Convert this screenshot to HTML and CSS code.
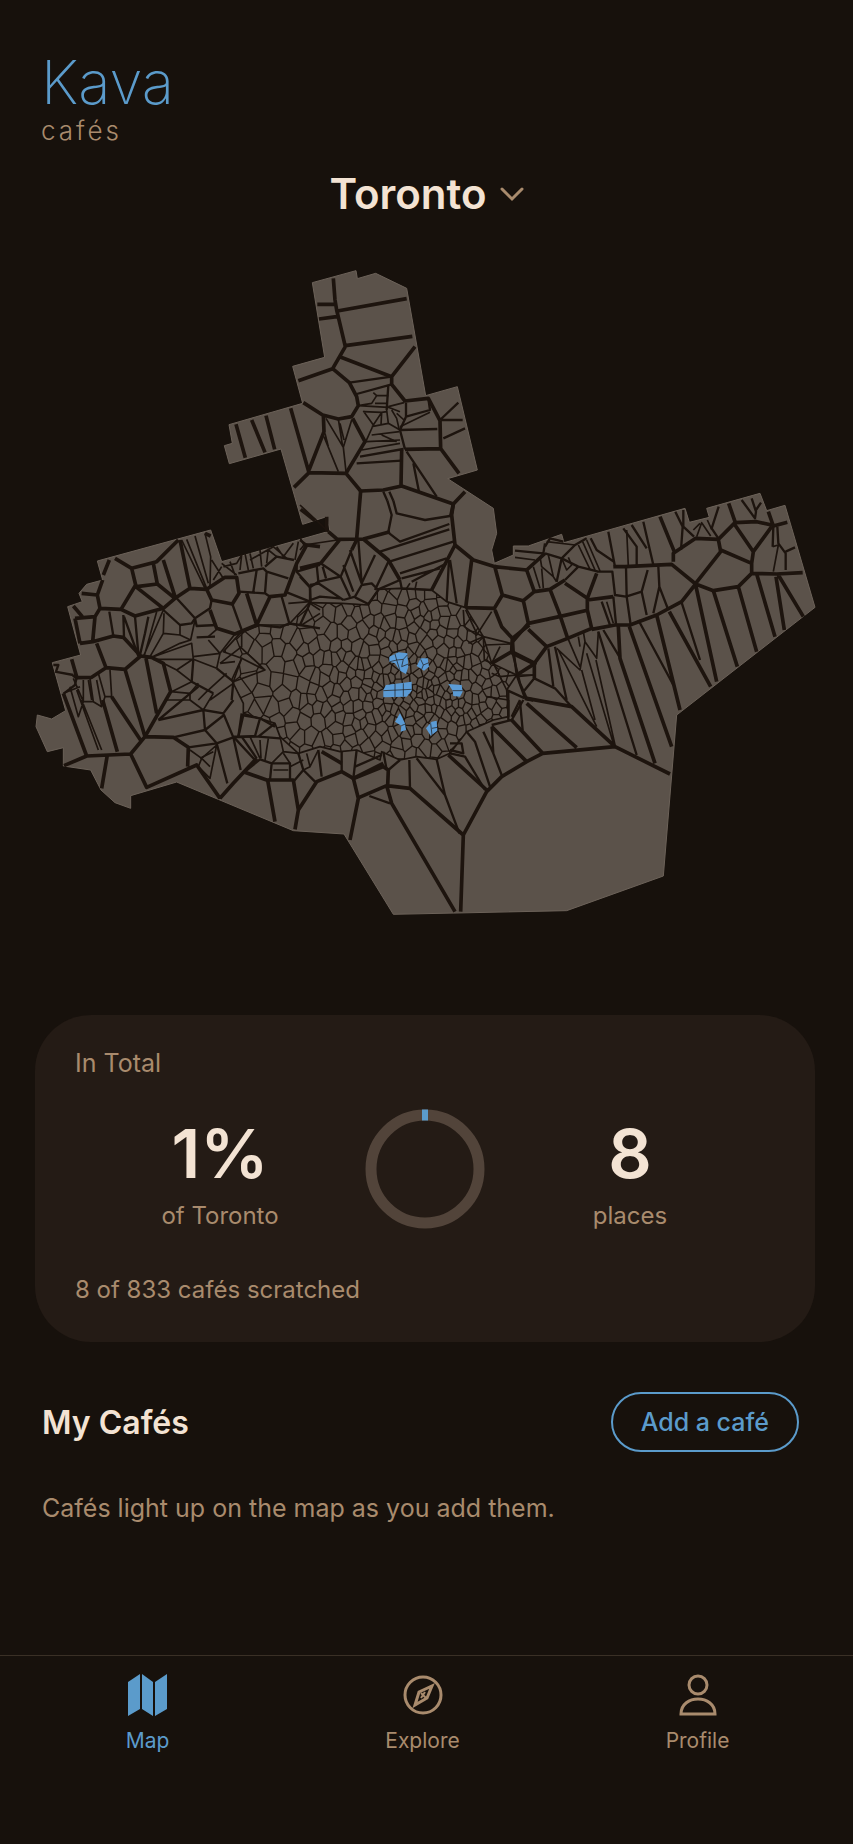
FILE: index.html
```
<!DOCTYPE html>
<html lang="en">
<head>
  <meta charset="UTF-8" />
  <meta name="viewport" content="width=device-width, initial-scale=1.0" />
  <title>Kava cafés</title>
  <link rel="stylesheet" href="styles.css">
</head>

<body>
  <div class="app">
    <header class="brand">
      <h1 class="brand-name">Kava</h1>
      <p class="brand-sub">cafés</p>
    </header>

    <main class="content">
      <div class="city-picker">
        <select id="citySelect" class="city-select" aria-label="City">
          <option>Toronto</option>
        </select>
        <svg class="chevron" viewBox="0 0 24 16" aria-hidden="true"><path d="M2 3 L12 13 L22 3" /></svg>
      </div>

      <svg class="city-map" viewBox="0 750 2559 2040" role="img" aria-label="Map of cafés in Toronto">
        <defs>
          <clipPath id="downtownClip">
            <path id="downtownShape" d="M780 1875 L865 1875 928 1808 1025 1810 1105 1815 1135 1768 1200 1765 1295 1770 1340 1805 1397 1823 1450 1910 1475 1990 1550 2025 1520 2070 1525 2150 1480 2160 1400 2195 1350 2260 1310 2278 1250 2270 1200 2280 1145 2255 1140 2280 1070 2250 1020 2255 960 2240 895 2260 840 2210 825 2170 730 2140 730 2110 695 2040 725 1975 670 1955 720 1900 Z" />
          </clipPath>
        </defs>

        <path class="land" d="M937 848 L1068 812 1072 836 1127 820 1220 865 1277 1187 1372 1160 1432 1410 1343 1436 1480 1525 1490 1600 1475 1650 1483 1690 1540 1665 1540 1638 1585 1638 1685 1603 1692 1628 2055 1525 2068 1567 2128 1552 2120 1525 2280 1480 2300 1532 2355 1516 2445 1822 2030 2145 1990 2628 1700 2732 1180 2743 1032 2502 880 2492 530 2346 392 2387 392 2425 345 2408 303 2370 272 2310 190 2298 190 2243 142 2255 108 2180 112 2145 155 2157 197 2132 157 1988 242 1965 203 1820 247 1805 237 1780 260 1753 308 1740 292 1683 632 1590 665 1685 990 1593 980 1550 908 1573 843 1347 688 1391 673 1337 697 1330 687 1274 908 1210 878 1099 974 1072 Z" />

        <!-- downtown: small cells, filled in by the script -->
        <g clip-path="url(#downtownClip)">
          <path id="downtownCells" class="edge fine" />
        </g>
        <use href="#downtownShape" class="edge thin" />

        <!-- north -->
        <g transform="translate(600 750)">
          <path class="edge thick" d="M400 85 L405 150 410 180 436 290 398 356 295 392 M412 183 L620 146 M436 287 L637 259 M352 163 H405 M357 207 L410 200 M645 290 L575 380 M423 322 L575 380 M398 356 L448 398 470 440 475 467 455 500 415 507 368 495 310 458 M575 380 V403 L615 453 685 445 720 512 M272 475 L327 668 282 712 M327 668 L438 670 482 723 M370 495 L372 545 327 660 M438 670 L495 575 458 505 M482 723 L550 720 605 708 760 762 795 725 M760 762 L752 800 M605 600 L603 708 M720 512 L722 596 777 670 M615 598 L722 596 M302 778 L345 812 M380 800 V845 M108 523 L136 623 M155 510 L195 607 M198 497 L224 598" />
          <path class="edge mid" d="M448 398 L575 380 M470 432 L575 403 M720 510 L775 458 M722 510 H788 M730 565 L795 535 M618 458 V500 L600 540 712 537 M600 540 L615 598 M470 640 L605 632 M480 620 L610 597 M620 605 L710 740 M640 640 L657 725 M685 445 L690 480 618 500 M565 405 L560 480 M550 725 L562 752 M568 725 L580 752" />
          <path class="edge thin" d="M475 467 L515 460 530 437 520 428 M530 437 H565 M525 460 H560 M475 467 L565 472 600 485 M560 480 L565 520 600 540 M490 483 L520 525 545 487 560 485 M545 487 L543 525 M520 525 L495 580 M490 485 L545 487 M515 530 L565 520 M515 555 L598 545 M500 575 L600 570 M545 555 L590 575 M485 600 L600 580 M600 530 L690 487 M575 480 L590 505 598 540 M590 490 L612 510 M565 470 L612 458 M378 505 L430 592 455 510 M415 507 L428 590 M432 570 L420 520 M372 560 L415 665 M430 592 L438 665 M375 550 L385 590" />
        </g>

        <!-- midtown -->
        <g transform="translate(900 1500)">
          <path class="edge thick" d="M182 -27 L170 117 M85 95 L112 118 190 117 270 95 M460 12 L455 45 465 135 520 180 585 200 M465 135 L395 270 M515 180 L497 323 M583 195 L607 285 583 325 497 323 M583 200 L680 210 M607 285 L672 303 M585 330 L605 380 637 415 688 375 M637 415 L635 455 705 490 650 525 M635 455 L575 490 M675 595 L700 600 M120 118 L62 190 0 205 M190 117 L265 180 300 240 M170 120 L155 150" />
          <path class="edge mid" d="M262 2 L275 45 265 95 M280 2 L290 40 375 60 450 48 M265 98 L300 125 448 72 M240 155 L448 88 M268 185 L460 125 M300 220 L440 175 M305 235 L420 205 M300 240 L305 265 395 270 M335 245 L440 190 M62 190 L122 230 150 290 M155 150 L122 230 M130 195 L160 275 M150 150 L185 250 M175 120 L185 250 225 165 M225 270 L265 185 M235 268 L300 240 M50 195 L55 245 122 230 M0 230 L30 262 55 245 M30 262 L32 308 M68 200 L78 235 M55 250 L130 300 M32 300 L60 290 120 295 M130 300 L165 290 185 255 215 250 235 270 205 312 165 292 M447 180 L440 305 M450 180 L470 310 M637 420 L650 525 675 595 M620 570 L675 595 M625 570 V650 M660 600 L635 650 M660 605 L668 690" />
          <path class="edge thin" d="M490 330 L493 380 530 405 575 335 M497 330 L530 400 550 410 632 430 M555 435 L632 432 M550 410 L553 480 575 490 M575 490 L600 440 M580 490 L620 570 M650 525 L600 530 M575 520 L600 530 M560 590 L625 600 M505 430 L550 410 M320 265 L330 250 M345 268 L350 245 M655 525 L700 525 M0 15 L85 95 M0 113 L12 135 M12 135 L112 120 M0 150 L12 135" />
        </g>

        <!-- west -->
        <g transform="translate(60 1500)">
          <path class="edge thick" d="M268 180 L250 225 M285 175 L335 205 410 185 475 120 M335 205 L347 255 303 328 240 325 232 285 248 240 M185 280 L232 285 M303 328 L345 348 430 325 465 295 510 265 560 268 M347 260 L430 325 M350 260 L412 252 465 295 M400 190 L412 252 M430 180 L465 290 M480 120 L510 265 M240 325 L225 350 165 355 M225 350 L218 425 180 430 M160 318 L187 350 M165 355 L180 430 M218 425 L280 408 310 412 362 468 315 508 258 503 230 430 M315 508 L375 710 M160 525 L170 533 215 532 258 503 M155 478 L170 530 M362 468 L395 472 430 490 452 575 375 710 332 762 200 768 132 797 M378 475 L410 640 M130 580 L200 768 M332 762 L380 862 530 795 600 895 M262 765 L245 865 M375 710 L460 712 505 742 503 800 M248 600 L292 755 M275 590 L365 725 M560 268 L575 300 637 312 657 280 650 232 615 232 Z M570 330 L590 385 645 402 710 375 750 290 795 285 830 190 860 135 900 140 M680 280 L710 375 M600 895 L640 850 710 775 M555 100 L572 108" />
          <path class="edge mid" d="M105 515 L160 525 M100 495 L115 495 108 515 M310 345 L312 410 M268 335 L280 408 M312 350 L355 468 M132 580 L165 555 170 533 M470 295 L525 355 570 325 575 300 M637 312 L665 390 M715 375 L780 382 808 370 785 290 M657 275 L735 280 750 290 M735 280 L740 215 805 235 M740 215 L730 205 655 220 M710 210 L700 275 M840 120 L860 135 M830 190 V215 L900 195 M830 215 L870 260 V305 L795 275 M870 255 L900 250 M735 200 L770 170 822 180 M808 370 L840 375 870 310 M840 375 L900 385 M430 330 L480 375 515 370 525 355 M590 375 L530 378 525 355 M585 410 L530 412 M345 350 L355 460 M385 350 L375 400 360 465 M505 742 L590 730 640 712 705 708 M550 630 L555 690 460 712 M415 660 L550 630 610 640 640 600 M555 690 L612 645 640 712 662 810 M555 690 L590 730 622 850 M665 710 L710 775 M665 640 L655 710 M665 645 L720 655 765 680 M705 708 L720 655 M415 660 L535 560 M520 478 L515 545 580 580 M590 505 L640 545 635 600" />
          <path class="edge thin" d="M480 375 V405 L512 420 525 360 M432 340 L430 400 390 470 M430 330 L370 470 M410 335 L372 470 M395 472 L480 430 512 420 M430 400 L480 405 M400 478 H520 M400 470 L515 430 520 478 M520 470 L600 460 645 402 M565 420 L600 460 M565 410 L590 388 M520 478 L590 505 M430 490 L470 510 515 545 455 575 M470 510 L515 480 M580 580 L550 630 510 600 510 580 535 550 M452 575 L510 580 M440 600 L510 600 M535 600 L560 575 620 520 M570 600 L640 550 M590 505 L600 460 M600 490 L645 485 M665 400 L665 440 600 490 M640 545 L665 475 735 510 Z M660 440 L735 510 M535 800 L570 835 590 735 M510 750 L545 775 590 735 M535 800 L545 775 570 800 M485 120 L555 265 M500 118 L560 265 M525 108 L565 250 M555 100 L572 170 570 260 M575 180 L610 235 M605 190 L650 225 M630 185 L645 225 M580 240 L605 200 M610 200 L650 190 665 165 660 210 M690 160 L700 205 M675 160 L685 210 M720 150 L725 200 M745 145 L740 190 M690 180 L760 140 800 175 M770 140 L790 170 820 130 M835 125 L825 180 M745 150 L770 170 M870 310 L900 330 M805 310 L870 305 M845 375 L900 340 M150 560 L175 650 190 605 160 535 M190 540 V605 L220 605 210 535 M220 605 L245 620 230 540 M245 620 L255 590 275 590 270 510 M185 600 L245 750 M170 570 L235 750 M205 540 L215 600 M235 520 L255 590 M130 580 L180 560" />
        </g>

        <!-- south west -->
        <g transform="translate(540 1800)">
          <path class="edge thick" d="M190 515 L260 540 340 540 355 630 345 688 M262 535 L285 665 M355 630 L410 545 485 515 520 535 535 595 510 720 M425 455 L485 490 M520 535 L610 490" />
          <path class="edge mid" d="M485 515 V455 M415 450 L425 530 M370 510 L405 545 M340 545 L370 510 355 460 M270 540 L275 490 240 478 195 515 M520 535 L530 450 M275 490 H330 V540 M160 410 L225 480 M190 345 L175 410 M285 370 L235 410 160 410 M235 410 L300 415" />
          <path class="edge thin" d="M280 510 H325 M210 410 L240 475 M240 420 L243 475 M265 415 L255 480 M275 490 L310 455 355 460 M310 455 L300 410 M330 490 L310 460 M330 500 L370 480 M380 460 L390 500 370 510 M415 450 L390 500 M60 475 L100 455" />
        </g>

        <!-- lakeshore -->
        <g transform="translate(960 2100)">
          <path class="edge thick" d="M620 10 L770 143 M515 80 L620 185 M575 60 L668 160 M422 635 L430 405 500 275 545 230 620 185 668 160 885 140 1050 222 M430 405 L270 265 200 257 118 292 M200 257 L215 310 405 635 M95 238 L190 200 205 210 203 257 M385 165 L500 270" />
          <path class="edge mid" d="M268 180 L270 265 M290 175 L375 285 418 400 M350 178 L375 285 M148 288 L210 310 M440 95 L465 125 510 260 M490 95 L520 160 545 225 M515 80 L520 160 M390 160 L435 170 495 270 M200 210 L190 155 M205 210 L240 180 M105 200 L185 165 M515 75 L575 60 610 0 M565 60 V0 M390 150 L430 160 425 130 390 130" />
        </g>

        <!-- east -->
        <g transform="translate(1500 1410)">
          <path class="edge thick" d="M80 300 L103 365 70 392 M103 365 L150 358 195 330 M70 392 L85 460 38 515 V550 L100 580 M85 460 L178 440 265 420 M150 358 L178 430 203 505 M195 340 L262 385 290 310 M262 385 V420 L275 475 203 505 140 530 85 478 M140 530 L103 580 V625 M262 390 L340 380 M340 290 L375 290 515 283 587 342 545 395 470 435 390 465 345 465 275 478 M520 275 V250 L587 205 655 208 705 158 770 155 815 165 M480 140 L525 250 M587 340 L662 245 655 208 M662 240 L755 280 760 245 815 170 M705 165 L760 245 M755 280 V310 L715 350 640 362 587 342 M640 362 L712 590 M715 350 L770 545 M770 312 L825 500 M587 345 L650 635 M508 425 L632 650 M755 310 L830 312 908 308 M835 315 L910 440 M828 320 L853 480 M470 435 L540 720 M388 470 L515 830 M355 470 L360 565 465 880 M686 100 L705 155 M805 125 L820 168 862 157 M80 685 L215 710 345 830 M80 300 L135 250" />
          <path class="edge mid" d="M295 485 L410 855 M415 450 L520 645 M545 398 L600 570 M475 290 L478 350 505 420 M478 350 L460 430 M443 300 L425 365 378 380 345 375 337 305 290 305 M378 290 L380 380 392 465 M425 365 L440 435 M430 155 L460 285 M395 165 L440 235 M370 175 L410 230 V285 M325 185 L345 290 M272 205 L290 240 342 275 M340 380 L348 462 M305 395 L330 465 M295 305 L235 290 195 330 M235 290 L185 265 170 335 M45 242 L130 250 135 220 M135 250 L185 265 225 225 260 205 M135 230 L150 205 190 215 M526 125 L548 170 543 240 M550 120 V170 L582 200 M656 110 L635 175 655 205 M725 90 L765 145 768 125 755 85 M768 120 L783 98 M820 170 L818 230 M832 170 L835 220 857 250 V300 M857 245 L885 232 M145 535 L160 650 M165 530 L200 690 M103 625 L165 655 215 710 M70 665 L103 625 M310 480 L358 560 M38 550 L60 640 80 685" />
          <path class="edge thin" d="M380 180 L385 288 M320 395 L340 460 M235 225 L270 298 M248 215 L285 300 M260 210 L300 303 M45 262 L105 270 M140 215 L225 225 M120 260 L125 290 160 320 170 335 M130 355 L125 295 M145 255 L160 320 M100 290 L120 355 M185 265 L200 300 215 285 205 262 M590 200 L605 158 632 198 M580 180 L600 160 M622 150 L635 178 M818 230 L835 225 820 305 M175 540 L290 770 M245 600 L285 750 M170 535 L240 600 255 515 290 565 295 485 M205 508 L240 590 M260 550 L340 820 M288 570 L345 825 M235 500 L240 530 M250 485 L255 515 M50 620 L103 615" />
        </g>

        <!-- visited cafés -->
        <g class="visited" transform="translate(900 1500)">
          <path d="M268 470 L295 457 322 460 325 500 318 522 300 512 285 490 268 485 Z" />
          <path d="M350 498 L362 475 383 475 387 500 372 512 Z" />
          <path d="M250 570 L258 555 335 545 335 572 320 590 250 592 Z" />
          <path d="M285 665 L300 640 315 670 318 690 302 695 304 677 Z" />
          <path d="M378 685 L395 665 410 662 412 692 392 707 Z" />
          <path d="M445 552 L485 555 488 575 480 590 460 588 458 572 Z" />
          <path class="edge hairline" d="M285 462 L290 480 310 478 322 465 M270 485 L290 480 300 512 M310 478 L305 500 325 492 M362 478 L370 495 387 488 M370 495 L365 508 M285 552 V592 M310 550 V590 M250 572 L335 568 M304 677 L316 672 M392 670 L396 705 M396 685 L412 682 M458 572 L488 572" />
        </g>
      </svg>

      <section class="card">
        <h2 class="card-title">In Total</h2>
        <div class="stats">
          <div class="stat">
            <span class="stat-value">1%</span>
            <span class="stat-label">of Toronto</span>
          </div>
          <svg class="ring" viewBox="0 0 120 120" role="img" aria-label="1% of Toronto">
            <circle class="ring-track" cx="60" cy="60" r="54" />
            <path class="ring-value" d="M57 6 H63" />
          </svg>
          <div class="stat">
            <span class="stat-value">8</span>
            <span class="stat-label">places</span>
          </div>
        </div>
        <p class="card-note">8 of 833 cafés scratched</p>
      </section>

      <section class="my-cafes">
        <div class="section-head">
          <h2 class="section-title">My Cafés</h2>
          <button class="add-btn" type="button">Add a café</button>
        </div>
        <p class="empty-note">Cafés light up on the map as you add them.</p>
      </section>
    </main>

    <nav class="tabs">
      <a class="tab active" href="#map">
        <svg class="tab-icon" viewBox="0 0 40 42" aria-hidden="true">
          <path class="solid" d="M0 8 L12 0 V35 L0 42 Z M14 0 L25 8 V42 L14 35 Z M27 8 L39 0 V35 L27 42 Z" />
        </svg>
        Map
      </a>
      <a class="tab" href="#explore">
        <svg class="tab-icon" viewBox="0 0 40 42" aria-hidden="true">
          <circle cx="20" cy="21" r="18" />
          <path d="M29 12 L24 24 12 31 16 18 Z" />
          <path class="hair" d="M18 19 L23 24 M22 18 L18 24" />
        </svg>
        Explore
      </a>
      <a class="tab" href="#profile">
        <svg class="tab-icon" viewBox="0 0 40 42" aria-hidden="true">
          <circle cx="20" cy="11" r="9" />
          <path d="M3 40 C3 20 37 20 37 40 Z" />
        </svg>
        Profile
      </a>
    </nav>
  </div>

  <script src="map.js"></script>
</body>
</html>
```
FILE: map.js
```
// Voronoi cells for the downtown part of the map
const BOX = [640, 1740, 1570, 2300];
const CENTER = [1260, 2060];
// cells are a bit taller than wide
const STRETCH = 1.25;

let seed = 833;
function random() {
  seed = (seed * 1664525 + 1013904223) % 4294967296;
  return seed / 4294967296;
}

// cells get larger away from the centre
function spacing(x, y) {
  const d = Math.hypot((x - CENTER[0]) * 0.8, y - CENTER[1]);
  return (16 + Math.min(d, 400) * 0.08) * (0.65 + random() * 0.9);
}

function makeSites() {
  const sites = [];
  for (let i = 0; i < 9000; i++) {
    const x = BOX[0] + random() * (BOX[2] - BOX[0]);
    const y = BOX[1] + random() * (BOX[3] - BOX[1]);
    const r = spacing(x, y);
    if (sites.every(s => Math.hypot(s[0] - x * STRETCH, s[1] - y) > r)) {
      sites.push([x * STRETCH, y]);
    }
  }
  return sites;
}

// keep the part of the cell that is nearer to a than to b
function cut(cell, a, b) {
  const mx = (a[0] + b[0]) / 2;
  const my = (a[1] + b[1]) / 2;
  const side = p => (p[0] - mx) * (b[0] - a[0]) + (p[1] - my) * (b[1] - a[1]);
  const out = [];
  cell.forEach((p, i) => {
    const q = cell[(i + 1) % cell.length];
    const sp = side(p);
    const sq = side(q);
    if (sp <= 0) out.push(p);
    if (sp * sq < 0) {
      const t = sp / (sp - sq);
      out.push([p[0] + (q[0] - p[0]) * t, p[1] + (q[1] - p[1]) * t]);
    }
  });
  return out;
}

const sites = makeSites();
const cells = sites.map(a => {
  let cell = [[a[0] - 90, a[1] - 90], [a[0] + 90, a[1] - 90], [a[0] + 90, a[1] + 90], [a[0] - 90, a[1] + 90]];
  sites.forEach(b => {
    if (b !== a && Math.hypot(a[0] - b[0], a[1] - b[1]) < 180) {
      cell = cut(cell, a, b);
    }
  });
  return 'M' + cell.map(p => (p[0] / STRETCH).toFixed(1) + ' ' + p[1].toFixed(1)).join(' L') + ' Z';
});

document.getElementById('downtownCells').setAttribute('d', cells.join(' '));
```
FILE: styles.css
```
* {
  box-sizing: border-box;
}

body {
  margin: 0;
  background-color: #17110c;
  color: #f3e3d3;
  font-family: Inter, "Liberation Sans", sans-serif;
}

h1, h2, p {
  margin: 0;
  font-weight: 400;
}

.app {
  min-height: 100vh;
  display: flex;
  flex-direction: column;
}

.brand {
  padding: 48px 41px 0;
}

.brand-name {
  color: #5b9bcb;
  font-size: 60px;
  font-weight: 200;
  line-height: 68px;
}

.brand-sub {
  color: #a98b6d;
  font-size: 26px;
  font-weight: 300;
  letter-spacing: 3px;
  line-height: 30px;
}

.content {
  flex: 1;
}

.city-picker {
  display: flex;
  justify-content: center;
  align-items: center;
  gap: 12px;
  padding-top: 20px;
}

.city-select {
  appearance: none;
  border: none;
  padding: 0;
  background: none;
  color: inherit;
  font: inherit;
  font-size: 42px;
  font-weight: 600;
  line-height: 56px;
}

.chevron {
  width: 24px;
  height: 16px;
  fill: none;
  stroke: #a98b6d;
  stroke-width: 3;
  stroke-linecap: round;
}

/* map */
.city-map {
  display: block;
  width: 100%;
  margin-top: 28px;
}

.land {
  fill: #5b524a;
  stroke: #6c6259;
  stroke-width: 3;
}

.edge {
  fill: none;
  stroke: #1d140e;
  stroke-linejoin: round;
}

.thick {
  stroke-width: 11;
}

.mid {
  stroke-width: 7;
}

.thin {
  stroke-width: 5;
}

.fine {
  stroke-width: 4;
}

.hairline {
  stroke-width: 2;
}

.visited {
  fill: #5b9bd5;
}

/* totals */
.card {
  margin: 85px 38px 0 35px;
  padding: 32px 40px 36px;
  border-radius: 56px;
  background-color: #241b15;
}

.card-title, .card-note, .stat-label, .empty-note {
  color: #a98b6d;
  font-size: 24px;
  line-height: 32px;
}

.card-title {
  font-size: 25px;
}

.stats {
  display: grid;
  grid-template-columns: 1fr 120px 1fr;
  align-items: center;
  padding: 26px 0 42px;
}

.stat {
  display: flex;
  flex-direction: column;
  align-items: center;
  gap: 5px;
  padding-top: 6px;
}

.stat-value {
  font-size: 68px;
  font-weight: 600;
  line-height: 84px;
}

.ring {
  width: 120px;
  height: 120px;
  fill: none;
  stroke-width: 11;
}

.ring-track {
  stroke: #52443a;
}

.ring-value {
  stroke: #5b9bcb;
}

/* list */
.my-cafes {
  padding: 50px 54px 40px 42px;
}

.section-head {
  display: flex;
  justify-content: space-between;
  align-items: center;
}

.section-title {
  font-size: 32px;
  font-weight: 600;
}

.add-btn {
  height: 60px;
  padding: 0 28px;
  border: 2px solid #5b9bcb;
  border-radius: 30px;
  background: none;
  color: #5b9bcb;
  font: inherit;
  font-size: 25px;
  font-weight: 500;
  cursor: pointer;
}

.empty-note {
  margin-top: 40px;
  font-size: 25px;
}

/* bottom tabs */
.tabs {
  display: grid;
  grid-template-columns: repeat(3, 1fr);
  min-height: 189px;
  padding: 18px 18px 0 10px;
  border-top: 1px solid #3a3026;
}

.tab {
  display: flex;
  flex-direction: column;
  align-items: center;
  gap: 12px;
  color: #a98b6d;
  font-size: 21px;
  line-height: 26px;
  text-decoration: none;
}

.tab.active {
  color: #5b9bcb;
}

.tab-icon {
  width: 40px;
  height: 42px;
  fill: none;
  stroke: currentColor;
  stroke-width: 3;
}

.solid {
  fill: currentColor;
  stroke: none;
}

.hair {
  stroke-width: 2;
}
```
